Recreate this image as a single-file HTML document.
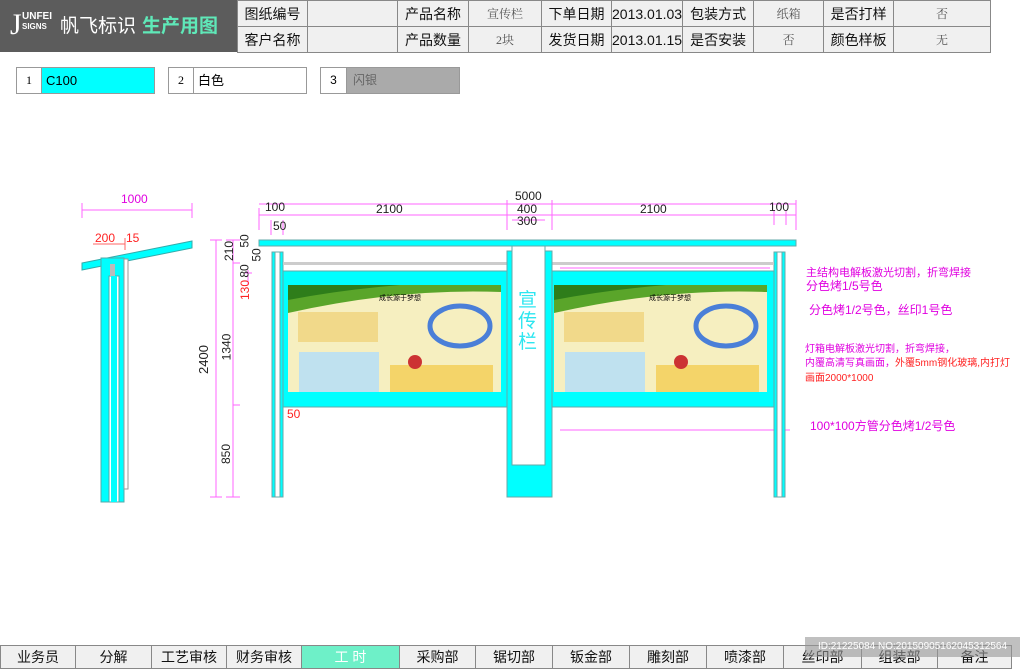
<!DOCTYPE html>
<html><head><meta charset="utf-8"><style>
body{margin:0;width:1024px;height:667px;overflow:hidden;background:#fff;font-family:"Liberation Sans","Noto Sans CJK SC",sans-serif;position:relative}
.a{position:absolute}
table{border-collapse:collapse;position:absolute}
td{border:1px solid #888;text-align:center;font-size:14px;padding:0;color:#111}
.h td{height:25px;background:#f0f0f0}
.v{font-family:"Liberation Serif","Noto Serif CJK SC",serif;font-size:12px;color:#555}
.bt td{height:22px;background:#f0f0f0;font-size:14px}
.m{color:#e000e0;font-size:12px;position:absolute;white-space:nowrap}
</style></head><body>
<div class="a" style="left:0;top:0;width:237px;height:52px;background:#5c5c5c"></div>
<div class="a" style="left:10px;top:8px;color:#fff;font-size:30px;font-family:'Liberation Serif',serif">J</div>
<div class="a" style="left:22px;top:12px;color:#fff;font-size:10px;line-height:10px;font-weight:bold">UNFEI<br><span style="font-size:8px">SIGNS</span></div>
<div class="a" style="left:60px;top:11px;color:#fff;font-size:19px">帆飞标识</div>
<div class="a" style="left:142px;top:11px;color:#5fe8b8;font-size:19px;font-weight:bold">生产用图</div>
<table class="h" style="left:237px;top:0;width:754px">
<tr><td style="width:69px">图纸编号</td><td style="width:89px"></td><td style="width:70px">产品名称</td><td style="width:72px" class="v">宣传栏</td><td style="width:69px">下单日期</td><td style="width:70px">2013.01.03</td><td style="width:70px">包装方式</td><td style="width:69px" class="v">纸箱</td><td style="width:69px">是否打样</td><td class="v">否</td></tr>
<tr><td>客户名称</td><td></td><td>产品数量</td><td class="v">2块</td><td>发货日期</td><td>2013.01.15</td><td>是否安装</td><td class="v">否</td><td>颜色样板</td><td class="v">无</td></tr>
</table>
<div class="a" style="left:16px;top:67px;width:137px;height:25px;border:1px solid #999;background:#0ff"><div style="width:24px;height:25px;background:#fff;border-right:1px solid #999;text-align:center;line-height:25px;font-size:12px;font-family:'Liberation Serif',serif;float:left">1</div><span style="line-height:25px;font-size:13px;margin-left:4px">C100</span></div>
<div class="a" style="left:168px;top:67px;width:137px;height:25px;border:1px solid #999;background:#fff"><div style="width:24px;height:25px;border-right:1px solid #999;text-align:center;line-height:25px;font-size:12px;font-family:'Liberation Serif',serif;float:left">2</div><span style="line-height:25px;font-size:13px;margin-left:4px">白色</span></div>
<div class="a" style="left:320px;top:67px;width:138px;height:25px;border:1px solid #999;background:#aaa"><div style="width:25px;height:25px;background:#fff;border-right:1px solid #999;text-align:center;line-height:25px;font-size:12px;float:left">3</div><span style="line-height:25px;font-size:12px;margin-left:6px;color:#666">闪银</span></div>

<svg class="a" style="left:0;top:0" width="1024" height="667">
<g stroke="#ff66ff" stroke-width="1" fill="none">
<path d="M82 210H192M82 203V218M192 203V218"/>
<path d="M93 244H125M125 238V250" stroke="#f66"/>
<path d="M210 240H222M210 497H222M216 240V497M226 240H240M226 497H240M233 240V497M233 263H240M233 405H240M248 270V285M245 273H252"/>
<path d="M259 208V230M259 215H796M796 200V230M259 204H796M507 200V230M552 200V230M512 220H545M271 220V235M283 220V235M774 210V225M786 210V225"/>
<path d="M560 268H770M580 316H775M560 353H775M560 430H790"/>
</g>
<polygon points="82,263 192,241 192,248 82,270" fill="#0ff" stroke="#3aa"/>
<rect x="101" y="258" width="23" height="244" fill="#0ff" stroke="#5aa"/>
<rect x="109" y="276" width="10" height="226" fill="#fff" stroke="#5aa"/>
<rect x="111" y="276" width="6" height="226" fill="#0ff"/>
<rect x="110" y="264" width="5" height="12" fill="#bbb"/>
<rect x="124" y="259" width="4" height="230" fill="#fff" stroke="#999"/>
<rect x="259" y="240" width="537" height="6" fill="#0ff" stroke="#6aa"/>
<rect x="272" y="252" width="11" height="245" fill="#0ff" stroke="#6aa"/>
<rect x="275" y="252" width="5" height="245" fill="#fff" stroke="#6aa"/>
<rect x="774" y="252" width="11" height="245" fill="#0ff" stroke="#6aa"/>
<rect x="777" y="252" width="5" height="245" fill="#fff" stroke="#6aa"/>
<rect x="283" y="262" width="224" height="3" fill="#ccc"/>
<rect x="552" y="262" width="222" height="3" fill="#ccc"/>
<rect x="283" y="271" width="224" height="136" fill="#0ff" stroke="#6aa"/>
<rect x="552" y="271" width="222" height="136" fill="#0ff" stroke="#6aa"/>
<rect x="507" y="251" width="45" height="246" fill="#0ff" stroke="#6aa"/>
<rect x="512" y="246" width="33" height="219" fill="#fff" stroke="#6aa"/>
<g id="p">
<rect x="288" y="285" width="213" height="107" fill="#f6efc0"/>
<path d="M288 285H501V292Q400 288 288 313Z" fill="#5aa52a"/>
<path d="M288 285H400Q340 290 288 300Z" fill="#2e7d1a"/>
<rect x="298" y="312" width="80" height="30" fill="#f1d98a"/>
<rect x="299" y="352" width="80" height="40" fill="#bfe1ef"/>
<rect x="390" y="365" width="103" height="27" fill="#f4d469"/>
<ellipse cx="460" cy="326" rx="30" ry="20" fill="none" stroke="#4a7fd8" stroke-width="5"/>
<circle cx="415" cy="362" r="7" fill="#c33"/>
</g>
<use href="#p" transform="translate(266,0)"/>
</svg>
<div class="a" style="left:518px;top:290px;color:#2ce6f0;font-size:19px;line-height:21px;width:22px">宣传栏</div>
<div class="a" style="left:379px;top:293px;font-size:7px">成长源于梦想</div>
<div class="a" style="left:649px;top:293px;font-size:7px">成长源于梦想</div>
<div class="m" style="left:121px;top:192px">1000</div>
<div class="m" style="left:95px;top:231px;color:#f22">200</div><div class="m" style="left:126px;top:231px;color:#f22">15</div>
<div class="m" style="left:265px;top:200px;color:#222">100</div>
<div class="m" style="left:273px;top:219px;color:#222">50</div>
<div class="m" style="left:376px;top:202px;color:#222">2100</div>
<div class="m" style="left:515px;top:189px;color:#222">5000</div>
<div class="m" style="left:517px;top:202px;color:#222">400</div>
<div class="m" style="left:517px;top:214px;color:#222">300</div>
<div class="m" style="left:640px;top:202px;color:#222">2100</div>
<div class="m" style="left:769px;top:200px;color:#222">100</div>
<div class="m" style="left:287px;top:407px;color:#f22">50</div>
<div class="m" style="left:189px;top:352px;color:#222;font-size:13px;transform:rotate(-90deg)">2400</div>
<div class="m" style="left:213px;top:340px;color:#222;transform:rotate(-90deg)">1340</div>
<div class="m" style="left:216px;top:447px;color:#222;transform:rotate(-90deg)">850</div>
<div class="m" style="left:219px;top:244px;color:#222;transform:rotate(-90deg)">210</div>
<div class="m" style="left:238px;top:234px;color:#222;transform:rotate(-90deg)">50</div>
<div class="m" style="left:250px;top:248px;color:#222;transform:rotate(-90deg)">50</div>
<div class="m" style="left:238px;top:264px;color:#222;transform:rotate(-90deg)">80</div>
<div class="m" style="left:235px;top:283px;color:#f22;transform:rotate(-90deg)">130</div>
<div class="m" style="left:806px;top:264px;font-size:11px">主结构电解板激光切割，折弯焊接</div>
<div class="m" style="left:806px;top:277px;font-size:12px">分色烤1/5号色</div>
<div class="m" style="left:809px;top:301px;font-size:12px">分色烤1/2号色，丝印1号色</div>
<div class="m" style="left:805px;top:340px;font-size:10px">灯箱电解板激光切割，折弯焊接，</div>
<div class="m" style="left:805px;top:354px;font-size:10px">内覆高清写真画面，<span style="color:#f22">外覆5mm钢化玻璃,内打灯</span></div>
<div class="m" style="left:805px;top:369px;font-size:10px;color:#f22">画面2000*1000</div>
<div class="m" style="left:810px;top:417px;font-size:12px">100*100方管分色烤1/2号色</div>
<table class="bt" style="left:0;top:645px;width:1012px">
<tr><td style="width:74px">业务员</td><td style="width:75px">分解</td><td style="width:74px">工艺审核</td><td style="width:74px">财务审核</td><td style="width:97px;background:#6ef0c8;color:#fff">工 时</td><td style="width:75px">采购部</td><td style="width:76px">锯切部</td><td style="width:76px">钣金部</td><td style="width:76px">雕刻部</td><td style="width:76px">喷漆部</td><td style="width:77px">丝印部</td><td style="width:75px">组装部</td><td>备注</td></tr>
</table>
<div class="a" style="left:805px;top:637px;width:215px;height:20px;background:rgba(150,150,150,.6);color:#fff;font-size:10px;line-height:20px;text-align:center">ID:21225084 NO:20150905162045312564</div>
</body></html>
